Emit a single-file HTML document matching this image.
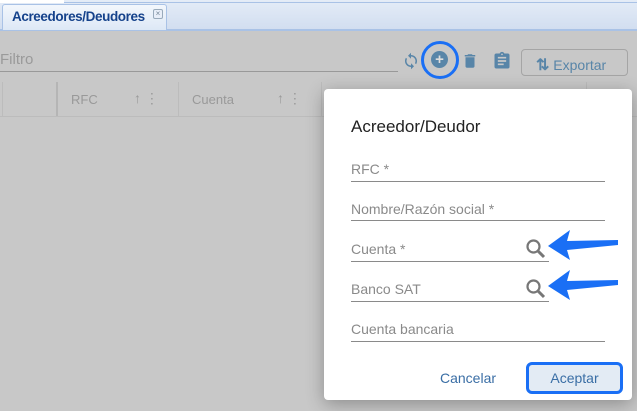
<!DOCTYPE html><html><head><meta charset="utf-8"><style>
*{box-sizing:border-box;margin:0;padding:0}
body{width:637px;height:411px;overflow:hidden;background:#c8c8c8;font-family:"Liberation Sans",sans-serif;position:relative}
.a{position:absolute}
.lbl{position:absolute;left:351px;font-size:14px;color:#8a8a8a}
.ln{position:absolute;left:351px;height:1px;background:#8a8a8a}
</style></head><body>
<div class="a" style="left:0;top:0;width:637px;height:31px;background:linear-gradient(#e4ecf7,#d2def0);border-bottom:2px solid #a9c2e6"></div>
<div class="a" style="left:0;top:0;width:64px;height:3px;background:#fff"></div>
<div class="a" style="left:64px;top:0;width:573px;height:3px;border-bottom:1px solid #a9c2e6"></div>
<div class="a" style="left:2px;top:4px;width:165px;height:26px;background:linear-gradient(#f3f7fc,#dde8f6);border:1px solid #a9c2e6;border-bottom:none;border-radius:3px 3px 0 0"></div>
<div class="a" style="left:12px;top:9px;font-size:13.5px;font-weight:bold;color:#15428b;letter-spacing:-0.4px">Acreedores/Deudores</div>
<div class="a" style="left:153px;top:9px;width:10px;height:10px;border:1px solid #9ab;border-radius:2px;background:#e8eef8;font-size:8px;line-height:8px;text-align:center;color:#789">×</div>
<div class="a" style="left:0;top:51px;font-size:15px;color:#9a9a9a">Filtro</div>
<div class="a" style="left:0;top:71px;width:398px;height:1px;background:#999"></div>
<div class="a" style="left:0;top:82px;width:637px;height:35px;border-bottom:1px solid #bcbcbc"></div>
<div class="a" style="left:2px;top:82px;width:1px;height:34px;background:#bcbcbc"></div>
<div class="a" style="left:56px;top:82px;width:2px;height:34px;background:#b5b5b5"></div>
<div class="a" style="left:178px;top:82px;width:1px;height:34px;background:#bcbcbc"></div>
<div class="a" style="left:321px;top:82px;width:1px;height:34px;background:#bcbcbc"></div>
<div class="a" style="left:71px;top:92px;font-size:13px;color:#999">RFC</div>
<div class="a" style="left:134px;top:90px;font-size:14px;color:#999">↑ ⋮</div>
<div class="a" style="left:192px;top:92px;font-size:13px;color:#999">Cuenta</div>
<div class="a" style="left:277px;top:90px;font-size:14px;color:#999">↑ ⋮</div>
<svg class="a" style="left:402px;top:52px" width="18" height="18" viewBox="0 0 24 24"><path fill="#5885a8" d="M12 4V1L8 5l4 4V6c3.3 0 6 2.7 6 6 0 1-.25 1.970-.7 2.8l1.46 1.46C19.54 15.03 20 13.57 20 12c0-4.4-3.6-8-8-8zm0 14c-3.3 0-6-2.7-6-6 0-1 .25-1.97.7-2.8L5.24 7.74C4.46 8.97 4 10.43 4 12c0 4.4 3.6 8 8 8v3l4-4-4-4v3z"/></svg>
<div class="a" style="left:421px;top:41px;width:38px;height:38px;border:3px solid #1a6ff5;border-radius:50%"></div>
<div class="a" style="left:431px;top:51px;width:17px;height:17px;border-radius:50%;background:#5885a8;color:#ddd;font-size:15px;font-weight:bold;line-height:17px;text-align:center">+</div>
<svg class="a" style="left:461px;top:51px" width="18" height="20" viewBox="0 0 24 24"><path fill="#5885a8" d="M6 19c0 1.1.9 2 2 2h8c1.1 0 2-.9 2-2V7H6v12zM19 4h-3.5l-1-1h-5l-1 1H5v2h14V4z"/></svg>
<svg class="a" style="left:492px;top:51px" width="20" height="20" viewBox="0 0 24 24"><path fill="#5885a8" d="M19 3h-4.2C14.4 1.8 13.3 1 12 1s-2.4.8-2.8 2H5c-1.1 0-2 .9-2 2v14c0 1.1.9 2 2 2h14c1.1 0 2-.9 2-2V5c0-1.1-.9-2-2-2zm-7 0c.55 0 1 .45 1 1s-.45 1-1 1-1-.45-1-1 .45-1 1-1zm2 14H7v-2h7v2zm3-4H7v-2h10v2zm0-4H7V7h10v2z"/></svg>
<div class="a" style="left:521px;top:49px;width:107px;height:27px;border:1px solid #a5a5a5;border-radius:4px;font-size:14px;color:#5885a8;padding:5px 0 0 14px"><b style="font-size:16px">⇅</b> Exportar</div>
<div class="a" style="left:586px;top:82px;width:1px;height:8px;background:#bcbcbc"></div>
<div class="a" style="left:324px;top:89px;width:308px;height:311px;background:#fff;border-radius:4px;box-shadow:0 4px 18px rgba(0,0,0,.3)"></div>
<div class="a" style="left:351px;top:117px;font-size:17px;color:#222">Acreedor/Deudor</div>
<div class="lbl" style="top:161px">RFC *</div><div class="ln" style="top:181px;width:254px"></div>
<div class="lbl" style="top:201px">Nombre/Razón social *</div><div class="ln" style="top:220px;width:254px"></div>
<div class="lbl" style="top:241px">Cuenta *</div><div class="ln" style="top:261px;width:198px"></div>
<div class="lbl" style="top:281px">Banco SAT</div><div class="ln" style="top:301px;width:198px"></div>
<div class="lbl" style="top:321px">Cuenta bancaria</div><div class="ln" style="top:341px;width:254px"></div>
<svg class="a" style="left:525px;top:238px" width="22" height="22" viewBox="0 0 22 22"><circle cx="8.5" cy="8.5" r="6" fill="none" stroke="#777" stroke-width="2.2"/><path d="M13 13l6 6" stroke="#777" stroke-width="3"/></svg>
<svg class="a" style="left:525px;top:278px" width="22" height="22" viewBox="0 0 22 22"><circle cx="8.5" cy="8.5" r="6" fill="none" stroke="#777" stroke-width="2.2"/><path d="M13 13l6 6" stroke="#777" stroke-width="3"/></svg>
<svg class="a" style="left:544px;top:227px" width="78" height="34" viewBox="0 0 78 34"><path d="M4 19L26 3 L23 14 L74 13 L74 18 L23 23 L26 33Z" fill="#1a6ff5"/></svg>
<svg class="a" style="left:544px;top:267px" width="78" height="34" viewBox="0 0 78 34"><path d="M4 19L26 3 L23 14 L74 13 L74 18 L23 23 L26 33Z" fill="#1a6ff5"/></svg>
<div class="a" style="left:440px;top:370px;font-size:14px;color:#3a6ea5">Cancelar</div>
<div class="a" style="left:526px;top:362px;width:97px;height:32px;border:3px solid #1a6ff5;border-radius:6px;background:#e3ebf4;font-size:14px;color:#3a6ea5;text-align:center;line-height:26px">Aceptar</div>
</body></html>
